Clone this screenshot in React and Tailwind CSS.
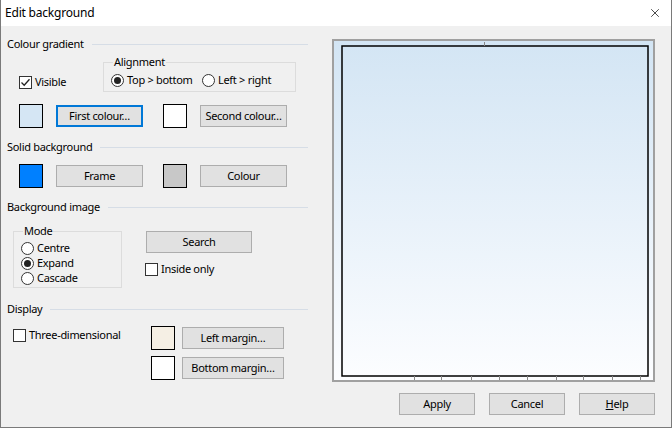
import { X } from 'lucide-react';

const font = { fontFamily: '"Noto Sans", "Liberation Sans", sans-serif' };

const Btn = ({ children, w, focus, className = '' }) => (
  <button
    className={`h-[22px] ${w} flex items-center justify-center bg-[#e1e1e1] text-black ${
      focus ? 'border-2 border-[#0078d7]' : 'border border-[#adadad]'
    } ${className}`}
  >
    {children}
  </button>
);

const Swatch = ({ color }) => (
  <div className={`w-[24px] h-[24px] border border-black ${color}`} />
);

const Check = ({ label }) => (
  <div className="flex items-center h-4 gap-[3px]">
    <span className="w-[13px] h-[13px] border border-[#333] bg-white" />
    <span>{label}</span>
  </div>
);

const CheckOn = ({ label }) => (
  <div className="flex items-center h-4 gap-[3px]">
    <span className="w-[13px] h-[13px] border border-[#333] bg-white flex items-center justify-center">
      <svg width="11" height="11" viewBox="0 0 11 11">
        <path d="M1.5 5.5 L4.2 8.2 L9.5 2.2" fill="none" stroke="#222" strokeWidth="1.3" />
      </svg>
    </span>
    <span>{label}</span>
  </div>
);

const Radio = ({ label, on }) => (
  <div className="flex items-center h-[15px] gap-[3px]">
    <span className="w-[13px] h-[13px] rounded-full border border-[#333] bg-white flex items-center justify-center">
      {on && <span className="w-[7px] h-[7px] rounded-full bg-[#222]" />}
    </span>
    <span>{label}</span>
  </div>
);

const Header = ({ children, className = '' }) => (
  <div className={`flex items-center h-4 ${className}`}>
    <span>{children}</span>
    <div className="flex-1 h-px bg-[#d6dde6] ml-[8px]" />
  </div>
);

export default function App() {
  const ticks = [414, 441, 471, 499, 527, 556, 583, 612, 640];
  return (
    <div
      className="w-[672px] h-[428px] flex flex-col border-x border-b border-[#7a7a7a] bg-[#f0f0f0] text-[11px] tracking-[-0.3px] text-black overflow-hidden"
      style={font}
    >
      {/* title bar */}
      <div className="h-[26px] bg-white flex items-center justify-between pl-[4px] pr-[9px] text-[12px] tracking-[-0.2px]">
        <span>Edit background</span>
        <X size={14} strokeWidth={1.2} className="text-black" />
      </div>

      <div className="flex flex-1">
        {/* left column */}
        <div className="w-[331px] pl-[6px] pr-[24px] pt-[10px] flex flex-col">
          <Header>Colour gradient</Header>

          <div className="flex mt-[2px] h-[38px]">
            <div className="w-[96px] pl-[12px] pt-[20px]">
              <CheckOn label="Visible" />
            </div>
            <fieldset className="w-[193px] h-[38px] border border-[#dcdcdc] px-[7px]">
              <legend className="ml-[2px] px-[1px] leading-4">Alignment</legend>
              <div className="flex gap-[4px] pt-[3px]">
                <div className="w-[87px]">
                  <Radio label="Top > bottom" on />
                </div>
                <Radio label="Left > right" />
              </div>
            </fieldset>
          </div>

          <div className="flex items-center mt-[12px] pl-[12px]">
            <Swatch color="bg-[#d5e6f4]" />
            <Btn w="w-[87px]" focus className="ml-[13px]">First colour…</Btn>
            <div className="ml-[20px]"><Swatch color="bg-white" /></div>
            <Btn w="w-[87px]" className="ml-[13px]">Second colour…</Btn>
          </div>

          <Header className="mt-[11px]">Solid background</Header>

          <div className="flex items-center mt-[9px] pl-[12px]">
            <Swatch color="bg-[#0080ff]" />
            <Btn w="w-[87px]" className="ml-[13px]">Frame</Btn>
            <div className="ml-[20px]"><Swatch color="bg-[#c8c8c8]" /></div>
            <Btn w="w-[87px]" className="ml-[13px]">Colour</Btn>
          </div>

          <Header className="mt-[11px]">Background image</Header>

          <div className="flex mt-[8px] pl-[6px]">
            <fieldset className="w-[109px] h-[65px] border border-[#dcdcdc] px-[7px]">
              <legend className="ml-[2px] px-[1px] leading-4">Mode</legend>
              <div className="flex flex-col mt-[2px]">
                <Radio label="Centre" />
                <Radio label="Expand" on />
                <Radio label="Cascade" />
              </div>
            </fieldset>
            <div className="ml-[24px] flex flex-col">
              <Btn w="w-[106px]" className="mt-[8px]">Search</Btn>
              <div className="mt-[8px] -ml-[1px]">
                <Check label="Inside only" />
              </div>
            </div>
          </div>

          <Header className="mt-[13px]">Display</Header>

          <div className="flex mt-[9px] pl-[6px]">
            <div className="w-[138px] mt-[1px]">
              <Check label="Three-dimensional" />
            </div>
            <div className="flex flex-col gap-[6px]">
              <div className="flex items-center gap-[7px]">
                <Swatch color="bg-[#f5efe4]" />
                <Btn w="w-[102px]">Left margin…</Btn>
              </div>
              <div className="flex items-center gap-[7px]">
                <Swatch color="bg-white" />
                <Btn w="w-[102px]">Bottom margin…</Btn>
              </div>
            </div>
          </div>
        </div>

        {/* right column */}
        <div className="flex flex-col pt-[13px]">
          <div className="w-[323px] h-[343px] border-2 border-[#a0a0a0]">
            <svg width="319" height="339" viewBox="0 0 319 339">
              <defs>
                <linearGradient id="g" x1="0" y1="0" x2="0" y2="1">
                  <stop offset="0" stopColor="#d3e5f4" />
                  <stop offset="1" stopColor="#fcfdff" />
                </linearGradient>
              </defs>
              <rect x="0" y="0" width="319" height="339" fill="url(#g)" />
              <rect x="8" y="5" width="306" height="330" fill="none" stroke="#000" strokeWidth="1.5" />
              <line x1="150.5" y1="1" x2="150.5" y2="5" stroke="#888" />
              {ticks.map((t) => (
                <line key={t} x1={t - 333.5} y1="335" x2={t - 333.5} y2="339" stroke="#888" />
              ))}
            </svg>
          </div>
          <div className="flex gap-[14px] mt-[11px] pl-[67px]">
            <Btn w="w-[76px]">Apply</Btn>
            <Btn w="w-[76px]">Cancel</Btn>
            <Btn w="w-[76px]">
              <span><span className="underline">H</span>elp</span>
            </Btn>
          </div>
        </div>
      </div>
    </div>
  );
}
